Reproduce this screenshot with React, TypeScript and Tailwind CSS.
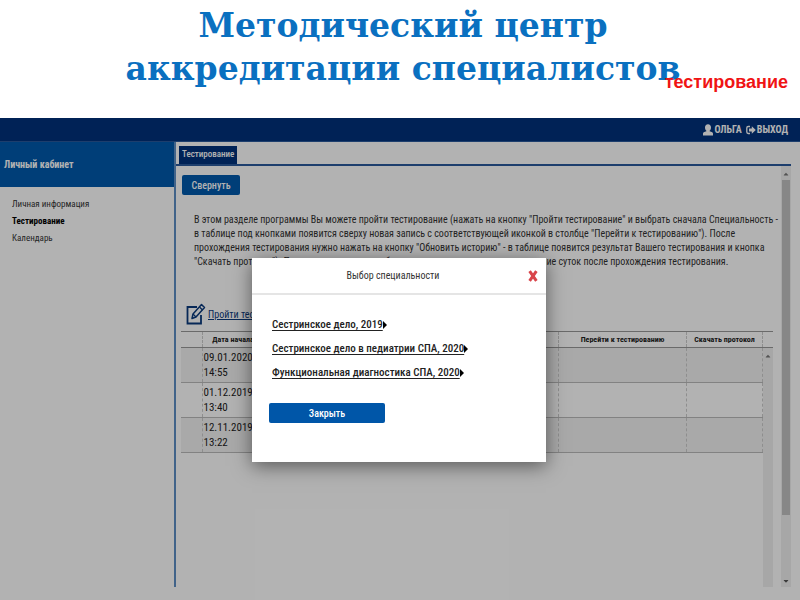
import type { ReactNode } from 'react'
import { FaCaretDown, FaCaretUp } from 'react-icons/fa'

interface Attempt {
  date: string
  time: string
}

const ATTEMPTS: Attempt[] = [
  { date: '09.01.2020', time: '14:55' },
  { date: '01.12.2019', time: '13:40' },
  { date: '12.11.2019', time: '13:22' },
]

const SPECIALTIES = [
  'Сестринское дело, 2019',
  'Сестринское дело в педиатрии СПА, 2020',
  'Функциональная диагностика СПА, 2020',
]

const INTRO_LINES = [
  'В этом разделе программы Вы можете пройти тестирование (нажать на кнопку "Пройти тестирование" и выбрать сначала Специальность -',
  'в таблице под кнопками появится сверху новая запись с соответствующей иконкой в столбце "Перейти к тестированию"). После',
  'прохождения тестирования нужно нажать на кнопку "Обновить историю" - в таблице появится результат Вашего тестирования и кнопка',
  '"Скачать протокол"). Протокол тестирования будет доступен для просмотра в течение суток после прохождения тестирования.',
]

function EditIcon() {
  return (
    <svg viewBox="0 0 20 22" className="h-[22px] w-5 shrink-0" fill="none" stroke="#0b3a7d" aria-hidden="true">
      <path d="M11 4H1.500v16.500H15V12" strokeWidth="1.800" />
      <path d="M7 11 15.500 1.500l3 3L10 14l-4 1.500z" strokeWidth="1.500" strokeLinejoin="round" />
      <path d="m13.500 4 3 3M7 11l3 3" strokeWidth="1.200" />
    </svg>
  )
}

function UserIcon() {
  return (
    <svg viewBox="0 0 10 12" className="h-3 w-[10px] shrink-0" fill="currentColor" aria-hidden="true">
      <path d="M5 .3c1.900 0 3 1.300 3 3.200 0 1.500-.6 2.700-1.400 3.300v.4l2.100.7c.9.300 1.300.9 1.300 1.800v1.800H0V9.700c0-.9.400-1.500 1.300-1.800l2.100-.7v-.4C2.600 6.200 2 5 2 3.500 2 1.600 3.100.3 5 .3z" />
    </svg>
  )
}

function SignOutIcon() {
  return (
    <svg viewBox="0 0 10 10" className="size-[10px] shrink-0" aria-hidden="true">
      <path d="M4 1.500H2.200C1.300 1.500.8 2 .8 2.900v4.200c0 .9.500 1.400 1.400 1.400H4" fill="none" stroke="currentColor" strokeWidth="1.300" />
      <path d="M3 3.600h2.800V1.200L9.800 5l-4 3.800V6.400H3z" fill="currentColor" />
    </svg>
  )
}

function SlideHeading() {
  return (
    <header className="relative h-[118px] shrink-0 bg-white">
      <h1 className="pt-1 pl-1.5 text-center [font-family:'Bookman_Old_Style','DejaVu_Serif',serif] text-[33px] leading-[43px] font-bold text-[#0a70c0]">
        Методический центр
        <br />
        аккредитации специалистов
      </h1>
      <p className="absolute right-3 bottom-6 [font-family:'Liberation_Sans',sans-serif] text-lg leading-6 font-bold text-[#f01414]">
        тестирование
      </p>
    </header>
  )
}

function TopBar() {
  return (
    <div className="flex h-6 shrink-0 items-center justify-end gap-1 border-b border-[#2a5a9c] bg-[#00327c] px-3 text-[10px] font-bold text-white">
      <a href="#profile" className="flex items-center gap-px">
        <UserIcon />
        ОЛЬГА
      </a>
      <a href="#logout" className="flex items-center gap-px">
        <SignOutIcon />
        ВЫХОД
      </a>
    </div>
  )
}

function Sidebar() {
  return (
    <aside className="w-[176px] shrink-0 border-r-2 border-[#5d8fc4]">
      <h2 className="flex h-[45px] items-center bg-[#0059ad] px-1 text-[10px] font-bold text-white">Личный кабинет</h2>
      <nav className="flex flex-col px-3 pt-[9px] text-[9px] leading-[17px] text-[#333]">
        <a href="#info">Личная информация</a>
        <a href="#testing" className="font-bold text-black">
          Тестирование
        </a>
        <a href="#calendar">Календарь</a>
      </nav>
    </aside>
  )
}

function HeadCell({ children }: { children?: ReactNode }) {
  return <th className="border-r border-dashed border-[#ccc] p-0 text-center font-bold">{children}</th>
}

function HistoryTable() {
  return (
    <div className="mr-2 ml-[5px] flex flex-1">
      <table className="w-full table-fixed self-start border-collapse border-y border-[#999] text-[#222]">
        <colgroup>
          <col className="w-[21px]" />
          <col className="w-[62px]" />
          <col />
          <col className="w-[128px]" />
          <col className="w-[76px]" />
        </colgroup>
        <thead>
          <tr className="h-4 border-b border-[#999] text-[8px] whitespace-nowrap">
            <HeadCell />
            <HeadCell>Дата начала</HeadCell>
            <HeadCell />
            <HeadCell>Перейти к тестированию</HeadCell>
            <HeadCell>Скачать протокол</HeadCell>
          </tr>
        </thead>
        <tbody>
          {ATTEMPTS.map((attempt) => (
            <tr
              key={attempt.date}
              className="h-[35px] border-b border-[#bbb] text-[11px] leading-[15px] odd:bg-[#f2f2f2] [&>td]:border-r [&>td]:border-dashed [&>td]:border-[#ccc]"
            >
              <td />
              <td className="p-0 pl-px">
                {attempt.date}
                <br />
                {attempt.time}
              </td>
              <td />
              <td />
              <td />
            </tr>
          ))}
        </tbody>
      </table>
      <div className="flex w-[10px] shrink-0 flex-col">
        <div className="h-[17px] border-y border-[#999]" />
        <div className="flex flex-1 justify-center bg-[#f0f0f0] pt-1 text-[#777]">
          <FaCaretUp className="size-2" />
        </div>
      </div>
    </div>
  )
}

function Workspace() {
  return (
    <main className="mr-[9px] flex min-w-0 flex-1 flex-col">
      <div className="flex h-6 shrink-0 items-end border-b-2 border-[#2a5a9c] pl-[3px]">
        <button type="button" className="h-[18px] bg-[#00327c] px-[3px] text-[9px] font-medium text-white">
          Тестирование
        </button>
      </div>
      <div className="flex flex-1">
        <div className="flex min-w-0 flex-1 flex-col">
          <button
            type="button"
            className="mt-[9px] ml-1.5 h-5 w-[58px] shrink-0 self-start rounded-xs bg-[#0059ad] text-[10px] font-medium text-white"
          >
            Свернуть
          </button>
          <p className="mt-[18px] ml-[18px] text-[10px] leading-[14px] whitespace-nowrap text-[#333]">
            {INTRO_LINES.map((line) => (
              <span key={line} className="block">
                {line}
              </span>
            ))}
          </p>
          <div className="mt-[34px] mb-1.5 flex items-center gap-0.5 pl-[10px]">
            <EditIcon />
            <a href="#start" className="text-[10px] text-[#0b3a7d] underline">
              Пройти тестирование
            </a>
          </div>
          <HistoryTable />
        </div>
        <div className="flex w-[10px] shrink-0 flex-col items-center bg-[#f0f0f0] text-[#555]">
          <FaCaretUp className="mt-1 mb-0.5 size-2 shrink-0 text-[#777]" />
          <div className="w-2 flex-[334] bg-[#c2c2c2]" />
          <div className="flex-[62]" />
          <FaCaretDown className="mb-0.5 size-2 shrink-0" />
        </div>
      </div>
    </main>
  )
}

function SpecialtyDialog() {
  return (
    <div className="absolute inset-0 flex items-center justify-center bg-black/30">
      <section
        role="dialog"
        aria-modal="true"
        aria-labelledby="dialog-title"
        className="mt-0.5 mr-0.5 w-[294px] bg-white shadow-[0_4px_18px_rgba(0,0,0,0.5)]"
      >
        <header className="relative flex h-[37px] items-center justify-center border-b-2 border-[#e5e5e5]">
          <h2 id="dialog-title" className="pr-3 text-[10px] text-[#333]">
            Выбор специальности
          </h2>
          <button type="button" aria-label="Закрыть окно" className="absolute right-2 text-[#d9444a]">
            <svg viewBox="0 0 10 12" className="h-3 w-[10px]" fill="none" stroke="currentColor" aria-hidden="true">
              <path d="M1.600 1.200 8.400 10.800M8.400 1.200 1.600 10.800" strokeWidth="3" />
            </svg>
          </button>
        </header>
        <ul className="flex flex-col px-5 pt-[18px] text-[11px] leading-6 font-medium text-[#222]">
          {SPECIALTIES.map((name) => (
            <li key={name}>
              <a href="#specialty" className="inline-flex items-center">
                <span className="underline underline-offset-2">{name}</span>
                <svg viewBox="0 0 4 8" className="h-2 w-1" aria-hidden="true">
                  <path d="M0 0 4 4 0 8z" fill="#000" />
                </svg>
              </a>
            </li>
          ))}
        </ul>
        <button
          type="button"
          className="mt-[18px] mb-[39px] ml-[17px] block h-5 w-[116px] rounded-xs bg-[#0056a8] text-[10px] font-medium text-white"
        >
          Закрыть
        </button>
      </section>
    </div>
  )
}

export default function App() {
  return (
    <div className="flex min-h-screen flex-col bg-white">
      <SlideHeading />
      <div className="relative flex flex-1 flex-col overflow-hidden [font-family:'Roboto_Condensed','Liberation_Sans_Narrow',Roboto,sans-serif]">
        <TopBar />
        <div className="mb-[13px] flex flex-1">
          <Sidebar />
          <Workspace />
        </div>
        <SpecialtyDialog />
      </div>
    </div>
  )
}
